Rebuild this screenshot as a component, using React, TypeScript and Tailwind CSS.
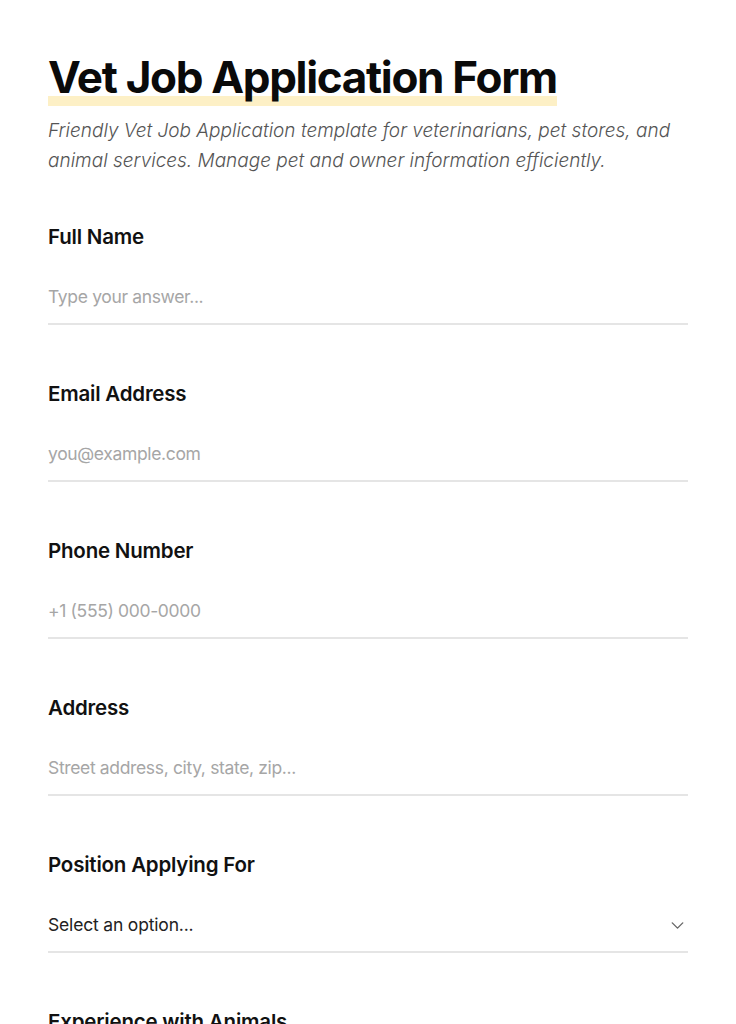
import { ChevronDown } from "lucide-react";

const fields = [
  { label: "Full Name", placeholder: "Type your answer..." },
  { label: "Email Address", placeholder: "you@example.com" },
  { label: "Phone Number", placeholder: "+1 (555) 000-0000" },
  { label: "Address", placeholder: "Street address, city, state, zip..." },
];

export default function App() {
  return (
    <div className="min-h-screen bg-white px-12 pt-[53px] font-['Inter',sans-serif] text-[#111]">
      <h1 className="inline-block bg-[linear-gradient(to_top,#fdf0c6_10px,transparent_10px)] pb-[5px] text-[44px] font-bold leading-[48px] tracking-[-0.03em] text-[#0a0a0a]">
        Vet Job Application Form
      </h1>
      <p className="mt-[10px] text-[19px] italic font-light leading-[30px] text-[#555]">
        Friendly Vet Job Application template for veterinarians, pet stores, and animal services. Manage pet and
        owner information efficiently.
      </p>

      <div className="mt-[47px] flex flex-col gap-[55px]">
        {fields.map((f) => (
          <div key={f.label} className="flex flex-col">
            <label className="text-[20.5px] font-semibold leading-[28px] tracking-[-0.01em] text-[#111]">{f.label}</label>
            <input
              type="text"
              placeholder={f.placeholder}
              className="mt-5 w-full border-b-2 border-[#e5e5e5] bg-transparent py-3 text-[17.5px] leading-[28px] tracking-[-0.02em] text-[#222] outline-none placeholder:text-[#a6a6a6]"
            />
          </div>
        ))}

        <div className="flex flex-col">
          <label className="text-[20.5px] font-semibold leading-[28px] tracking-[-0.01em] text-[#111]">
            Position Applying For
          </label>
          <div className="mt-5 flex items-center justify-between border-b-2 border-[#e5e5e5] py-3">
            <span className="text-[17.5px] leading-[28px] tracking-[-0.01em] text-[#222]">Select an option...</span>
            <ChevronDown size={21} className="shrink-0 text-[#666]" strokeWidth={1.6} />
          </div>
        </div>

        <div className="flex flex-col">
          <label className="text-[20.5px] font-semibold leading-[28px] tracking-[-0.01em] text-[#111]">
            Experience with Animals
          </label>
          <textarea
            placeholder="Type your answer..."
            rows={3}
            className="mt-5 w-full resize-none border-b-2 border-[#e5e5e5] bg-transparent py-3 text-[17.5px] leading-[28px] outline-none placeholder:text-[#a6a6a6]"
          />
        </div>
      </div>
    </div>
  );
}
